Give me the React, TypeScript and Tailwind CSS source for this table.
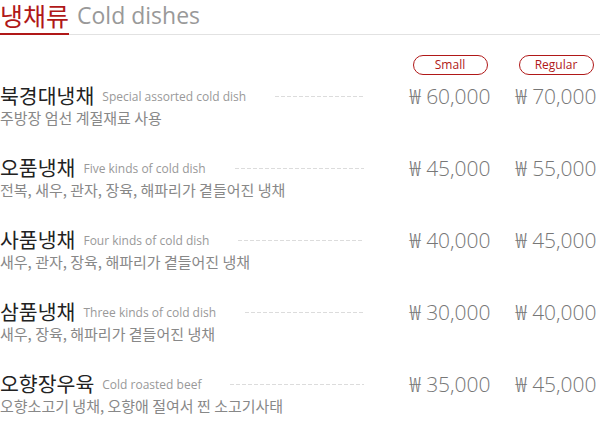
import * as React from "react";

type Dish = {
  name: string;
  en: string;
  desc: string;
  small: string;
  regular: string;
};

const dishes: Dish[] = [
  { name: "북경대냉채", en: "Special assorted cold dish", desc: "주방장 엄선 계절재료 사용", small: "60,000", regular: "70,000" },
  { name: "오품냉채", en: "Five kinds of cold dish", desc: "전복, 새우, 관자, 장육, 해파리가 곁들어진 냉채", small: "45,000", regular: "55,000" },
  { name: "사품냉채", en: "Four kinds of cold dish", desc: "새우, 관자, 장육, 해파리가 곁들어진 냉채", small: "40,000", regular: "45,000" },
  { name: "삼품냉채", en: "Three kinds of cold dish", desc: "새우, 장육, 해파리가 곁들어진 냉채", small: "30,000", regular: "40,000" },
  { name: "오향장우육", en: "Cold roasted beef", desc: "오향소고기 냉채, 오향애 절여서 찐 소고기사태", small: "35,000", regular: "45,000" },
];

const kr = "font-['Noto_Sans_CJK_KR','Noto_Sans',sans-serif]";
const en = "font-['Open_Sans','Noto_Sans_CJK_KR',sans-serif]";

function DishRow({ dish }: { dish: Dish }) {
  return (
    <div className="flex h-[72px]">
      <div className="flex w-[364px] flex-col">
        <div className="flex h-[25px] items-center">
          <span className={`${kr} text-[20.5px] leading-[25px] text-[#222]`}>{dish.name}</span>
          <span className={`${en} ml-[8px] mt-[3px] text-[12px] leading-[16px] text-[#999]`}>{dish.en}</span>
          <span className="ml-[29px] mt-[2px] h-px flex-1 bg-[linear-gradient(to_right,#dcdcdc_4px,transparent_4px)] bg-[length:6px_1px] bg-repeat-x" />
        </div>
        <div className={`${kr} text-[15px] leading-[19px] text-[#888]`}>{dish.desc}</div>
      </div>
      <div className="ml-[42px] flex gap-[18px]">
        <Price value={dish.small} />
        <Price value={dish.regular} />
      </div>
    </div>
  );
}

function Price({ value }: { value: string }) {
  return (
    <div className={`${en} w-[88px] whitespace-nowrap text-center text-[21px] font-light leading-[26px] text-[#777]`}>
      ₩ {value}
    </div>
  );
}

function SizePill({ label }: { label: string }) {
  return (
    <div className="flex w-[88px] justify-center">
      <span
        className={`${en} flex h-[20px] w-[75px] items-center justify-center rounded-full border border-[#b01818] text-[12px] text-[#b01818]`}
      >
        {label}
      </span>
    </div>
  );
}

export default function App() {
  return (
    <div className="h-[424px] w-[600px] overflow-hidden bg-white">
      {/* header */}
      <div className="flex h-[35px] items-end border-b border-[#e2e2e2]">
        <h2 className={`${kr} -mb-px border-b-2 border-[#b01818] pb-[1px] text-[25px] leading-[33px] font-normal text-[#b01818]`}>
          냉채류
        </h2>
        <span className={`${en} ml-[8px] pb-[3px] text-[23px] leading-[31px] text-[#999]`}>
          Cold dishes
        </span>
      </div>

      <div className="mt-[20px] flex justify-end gap-[18px]">
        <SizePill label="Small" />
        <SizePill label="Regular" />
      </div>

      <div className="mt-[8px] flex flex-col">
        {dishes.map((d) => (
          <DishRow key={d.name} dish={d} />
        ))}
      </div>
    </div>
  );
}
